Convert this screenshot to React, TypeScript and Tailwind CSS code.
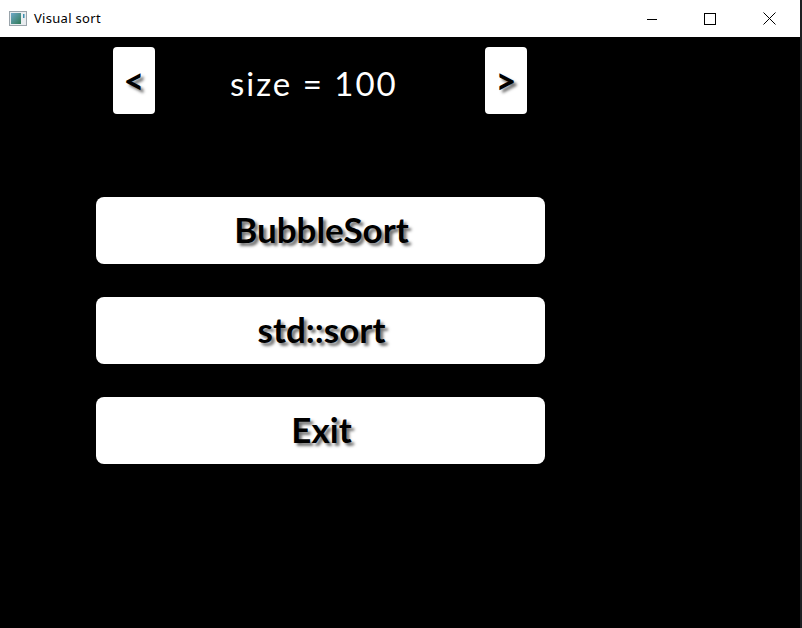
import React from 'react';

const labelShadow = '[text-shadow:3px_3px_3px_rgba(0,0,0,0.55)]';

const TitleBar = () => (
  <div className="flex h-[37px] items-center bg-white">
    <svg className="ml-[9px]" width="18" height="15" viewBox="0 0 18 15">
      <rect x="0.5" y="0.5" width="17" height="14" fill="#e8ecef" stroke="#9aa4ab" />
      <defs>
        <linearGradient id="ico" x1="0" y1="0" x2="1" y2="1">
          <stop offset="0" stopColor="#6fa8c9" />
          <stop offset="1" stopColor="#2f7a55" />
        </linearGradient>
      </defs>
      <rect x="2" y="2" width="10" height="11" fill="url(#ico)" />
      <rect x="14" y="3" width="1.5" height="4" fill="#3d8fb0" />
    </svg>
    <span className="ml-[7px] text-[13px] tracking-[0.3px] text-black font-['Noto_Sans',sans-serif]">Visual sort</span>
    <div className="ml-auto mr-[8px] flex h-full">
      <button className="flex w-[46px] items-center justify-center">
        <svg width="12" height="12" viewBox="0 0 12 12">
          <path d="M1 6.5h10" stroke="#000" strokeWidth="1" />
        </svg>
      </button>
      <button className="ml-[12px] flex w-[46px] items-center justify-center">
        <svg width="12" height="12" viewBox="0 0 12 12">
          <rect x="0.5" y="0.5" width="11" height="11" fill="none" stroke="#000" strokeWidth="1" />
        </svg>
      </button>
      <button className="ml-[13px] flex w-[46px] items-center justify-center">
        <svg width="13" height="13" viewBox="0 0 13 13">
          <path d="M0.5 0.5l12 12M12.5 0.5l-12 12" stroke="#000" strokeWidth="1" />
        </svg>
      </button>
    </div>
  </div>
);

const SizeButton = ({ label }: { label: string }) => (
  <button
    className={`flex h-[67px] w-[42px] items-center justify-center rounded-[4px] bg-white pb-[2px] text-[36px] font-bold text-black font-['Lato',sans-serif] ${labelShadow}`}
  >
    {label}
  </button>
);

const MenuButton = ({ label }: { label: string }) => (
  <button
    className={`flex h-[67px] w-[449px] items-center justify-center rounded-[8px] bg-white pb-[2px] pl-[2px] text-[35px] font-bold text-black font-['Lato',sans-serif] ${labelShadow}`}
  >
    {label}
  </button>
);

export default function App() {
  return (
    <div className="flex h-[628px] w-[802px] overflow-hidden">
      <div className="flex w-[800px] flex-col">
        <TitleBar />
        <div className="flex flex-1 flex-col bg-black">
          <div className="ml-[113px] mt-[10px] flex w-[414px] items-center">
            <SizeButton label="<" />
            <span className="ml-[75px] pt-[6px] text-[33px] tracking-[2px] text-white font-['Lato',sans-serif]">
              size = 100
            </span>
            <div className="ml-auto">
              <SizeButton label=">" />
            </div>
          </div>
          <div className="ml-[96px] mt-[83px] flex flex-col gap-[33px]">
            <MenuButton label="BubbleSort" />
            <MenuButton label="std::sort" />
            <MenuButton label="Exit" />
          </div>
        </div>
      </div>
      <div className="w-[2px] bg-[#1c1f22]" />
    </div>
  );
}
